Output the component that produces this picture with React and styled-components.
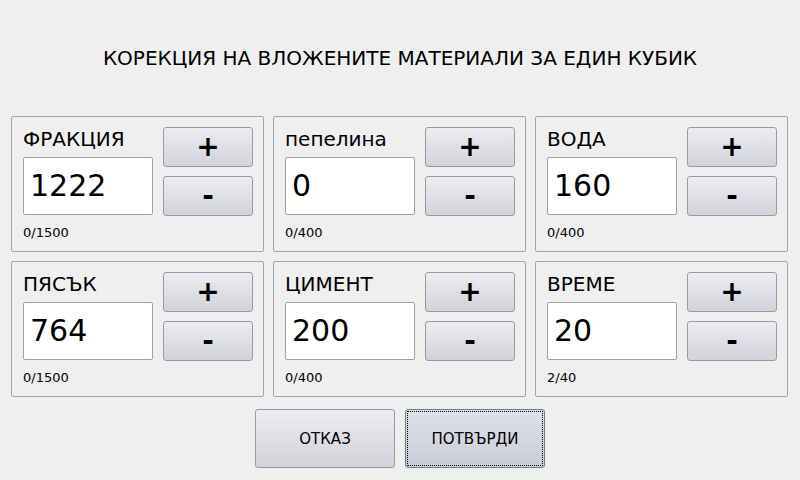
import React from "react";
import styled, { createGlobalStyle } from "styled-components";

const Global = createGlobalStyle`
  html, body { margin: 0; padding: 0; background: #efefef; }
  body { font-family: "DejaVu Sans", "Liberation Sans", sans-serif; color: #000; }
`;

const Screen = styled.div`
  width: 800px;
  height: 480px;
  box-sizing: border-box;
  display: flex;
  flex-direction: column;
  align-items: center;
  padding-top: 46px;
`;

const Title = styled.h1`
  margin: 0;
  font-size: 20px;
  font-weight: normal;
  line-height: 24px;
`;

const Grid = styled.div`
  margin-top: 46px;
  margin-right: 1px;
  display: grid;
  grid-template-columns: repeat(3, 253px);
  grid-auto-rows: 136px;
  gap: 9px;
`;

const Panel = styled.div`
  box-sizing: border-box;
  border: 1px solid #a3a3a3;
  border-radius: 2px;
  padding: 10px 10px 0 11px;
  display: grid;
  grid-template-columns: 130px 90px;
  grid-template-rows: 40px 40px auto;
  column-gap: 10px;
  row-gap: 9px;
`;

const LeftTop = styled.div`
  display: flex;
  flex-direction: column;
  grid-row: 1 / span 2;
  grid-column: 1;
`;

const Label = styled.div`
  font-size: 20px;
  line-height: 22px;
  height: 30px;
  padding-top: 1px;
  box-sizing: border-box;
`;

const Field = styled.div`
  box-sizing: border-box;
  width: 130px;
  height: 58px;
  background: #fff;
  border: 1px solid #a0a0a0;
  border-radius: 2px;
  font-size: 30px;
  line-height: 56px;
  padding-left: 6px;
`;

const StepButton = styled.button`
  box-sizing: border-box;
  width: 90px;
  height: 40px;
  margin: 0;
  padding: 0;
  border: 1px solid #9a9a9a;
  border-radius: 3px;
  background: linear-gradient(#ececf2, #d2d2da);
  font-family: "DejaVu Sans", sans-serif;
  font-size: 28px;
  font-weight: bold;
  line-height: 38px;
  color: #000;
  grid-column: 2;
`;

const Caption = styled.div`
  grid-column: 1 / span 2;
  font-size: 13px;
  line-height: 14px;
  padding-top: 1px;
`;

const Actions = styled.div`
  margin-top: 12px;
  display: flex;
  gap: 10px;
`;

const ActionButton = styled.button`
  box-sizing: border-box;
  width: 140px;
  height: 59px;
  margin: 0;
  border: 1px solid ${(p) => (p.$focused ? "#6a7c90" : "#9a9a9a")};
  border-radius: 3px;
  background: ${(p) =>
    p.$focused
      ? "linear-gradient(#dfe1ea, #c9ccd6)"
      : "linear-gradient(#ececf2, #d2d2da)"};
  font-family: "DejaVu Sans", sans-serif;
  font-size: 15px;
  color: #000;
  outline: ${(p) => (p.$focused ? "1px dotted #000" : "none")};
  outline-offset: -3px;
`;

const items = [
  { label: "ФРАКЦИЯ", value: "1222", range: "0/1500" },
  { label: "пепелина", value: "0", range: "0/400" },
  { label: "ВОДА", value: "160", range: "0/400" },
  { label: "ПЯСЪК", value: "764", range: "0/1500" },
  { label: "ЦИМЕНТ", value: "200", range: "0/400" },
  { label: "ВРЕМЕ", value: "20", range: "2/40" },
];

export default function App() {
  return (
    <Screen>
      <Global />
      <Title>КОРЕКЦИЯ НА ВЛОЖЕНИТЕ МАТЕРИАЛИ ЗА ЕДИН КУБИК</Title>
      <Grid>
        {items.map((it) => (
          <Panel key={it.label}>
            <LeftTop>
              <Label>{it.label}</Label>
              <Field>{it.value}</Field>
            </LeftTop>
            <StepButton>+</StepButton>
            <StepButton>-</StepButton>
            <Caption>{it.range}</Caption>
          </Panel>
        ))}
      </Grid>
      <Actions>
        <ActionButton>ОТКАЗ</ActionButton>
        <ActionButton $focused>ПОТВЪРДИ</ActionButton>
      </Actions>
    </Screen>
  );
}
